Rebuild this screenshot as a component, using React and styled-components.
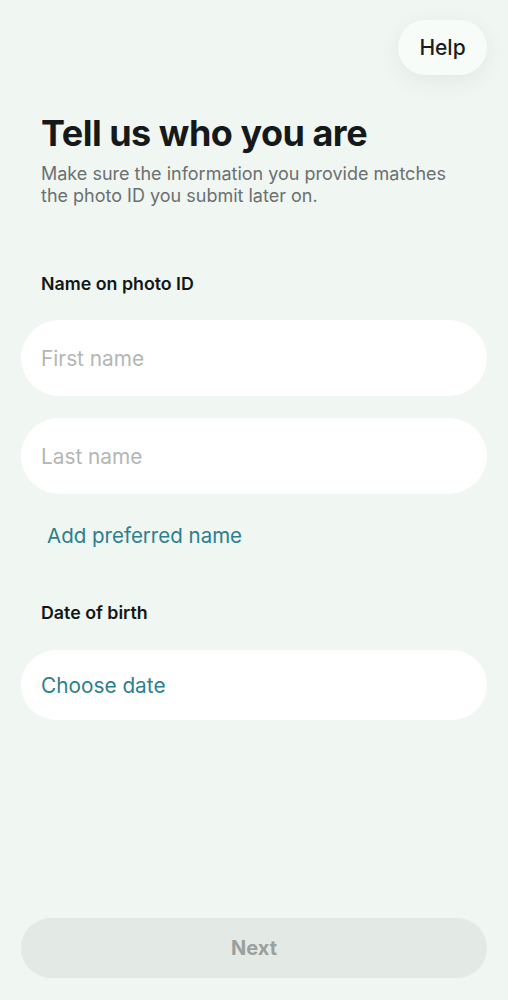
import React from "react";
import styled, { createGlobalStyle } from "styled-components";

const GlobalStyle = createGlobalStyle`
    body {
        margin: 0;
        background: #f0f6f2;
        font-family: Inter, "Noto Sans", sans-serif;
    }
`;

const Page = styled.div`
    min-height: 1000px;
    box-sizing: border-box;
    display: flex;
    flex-direction: column;
    padding: 20px 21px 22px 21px;
`;

const TopBar = styled.div`
    display: flex;
    justify-content: flex-end;
`;

const HelpButton = styled.button`
    width: 89px;
    height: 55px;
    border: none;
    border-radius: 28px;
    background: #f8fcf8;
    box-shadow: 0 6px 24px rgba(0, 0, 0, 0.06);
    font-family: inherit;
    font-size: 21px;
    font-weight: 500;
    color: #1a1c1c;
`;

const Title = styled.h1`
    margin: 38px 0 0 20px;
    font-size: 36px;
    font-weight: 700;
    letter-spacing: -0.5px;
    color: #16191a;
    line-height: 40px;
`;

const Subtitle = styled.p`
    margin: 10px 0 0 20px;
    font-size: 18px;
    line-height: 22px;
    color: #6b7070;
`;

const Label = styled.div`
    margin: ${(p) => p.$top}px 0 0 20px;
    font-size: 17.8px;
    font-weight: 600;
    color: #131616;
`;

const Field = styled.div`
    margin-top: ${(p) => p.$top}px;
    height: ${(p) => p.$h}px;
    border-radius: 38px;
    background: #ffffff;
    display: flex;
    align-items: center;
    padding-left: 20px;
    font-size: 20.8px;
    color: ${(p) => (p.$accent ? "#2b7f8e" : "#b3b6b5")};
`;

const LinkText = styled.div`
    margin: 29px 0 0 26px;
    font-size: 20.5px;
    color: #2b7f8e;
`;

const NextButton = styled.button`
    margin-top: auto;
    height: 60px;
    border: none;
    border-radius: 30px;
    background: #e3e9e5;
    font-family: inherit;
    font-size: 20px;
    font-weight: 700;
    color: #9b9f9d;
`;

export default function App() {
    return (
        <Page>
            <GlobalStyle />
            <TopBar>
                <HelpButton>Help</HelpButton>
            </TopBar>
            <Title>Tell us who you are</Title>
            <Subtitle>
                Make sure the information you provide matches
                <br />
                the photo ID you submit later on.
            </Subtitle>
            <Label $top={66}>Name on photo ID</Label>
            <Field $top={26} $h={76}>First name</Field>
            <Field $top={22} $h={76}>Last name</Field>
            <LinkText>Add preferred name</LinkText>
            <Label $top={54}>Date of birth</Label>
            <Field $top={27} $h={70} $accent>Choose date</Field>
            <NextButton>Next</NextButton>
        </Page>
    );
}
